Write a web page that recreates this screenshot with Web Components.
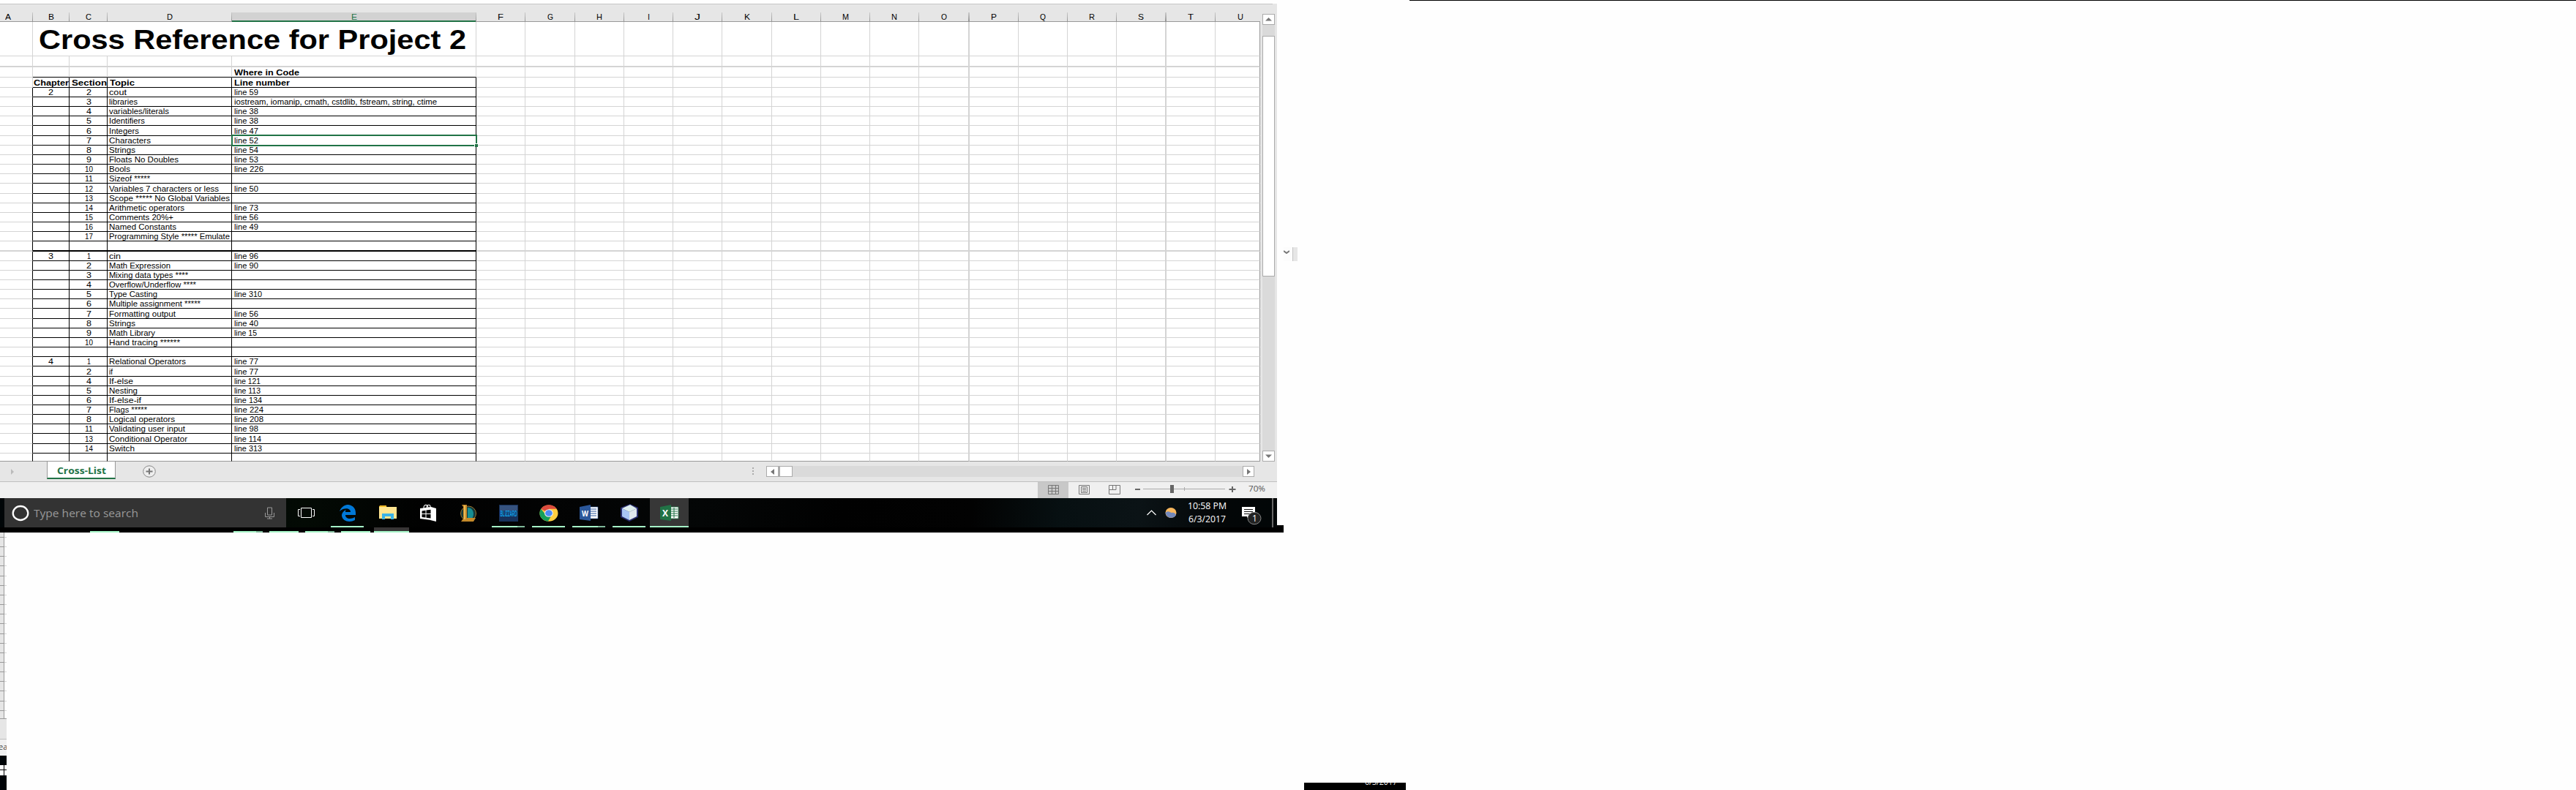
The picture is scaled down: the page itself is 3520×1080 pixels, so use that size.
<!DOCTYPE html>
<html lang="en">
<head>
<meta charset="utf-8">
<title>Cross Reference for Project 2</title>
<style>
html,body{margin:0;padding:0;background:#fefefe}
body{width:3520px;height:1080px;overflow:hidden;font-family:"Liberation Sans",sans-serif}
</style>
</head>
<body>
<desk-top></desk-top>
<script>
// Text scaled horizontally to a fixed width: <fit-text w="40">abc</fit-text>
class FitText extends HTMLElement{
  connectedCallback(){
    const r=this.attachShadow({mode:'open'});
    r.innerHTML='<style>:host{display:inline-block;white-space:nowrap;flex:none}span{display:inline-block;transform-origin:0 50%}</style><span><slot></slot></span>';
    const s=r.querySelector('span'),w=+this.getAttribute('w');
    this.style.width='auto';
    const n=s.getBoundingClientRect().width;
    this.style.width=w+'px';
    if(n)s.style.transform='scaleX('+(w/n)+')';
  }
}
customElements.define('fit-text',FitText);

const define=(name,html)=>customElements.define(name,class extends HTMLElement{
  connectedCallback(){if(!this.shadowRoot)this.attachShadow({mode:'open'}).innerHTML=typeof html==='function'?html(this):html;}
});

const COLS=[['A',45],['B',50],['C',52],['D',170],['E',334],['F',67],['G',68],['H',67],['I',67],['J',67],['K',68],['L',67],['M',67],['N',67],['O',69],['P',67],['Q',67],['R',67],['S',68],['T',67],['U',61]];

define('column-header',()=>`<style>
:host{display:flex;height:24px;background:#e6e6e6;box-sizing:border-box;border-top:1px solid #c6c6c6;padding-top:11px;width:1739px}
div{box-sizing:border-box;height:13px;display:flex;justify-content:center;font:11px/13px "Liberation Sans",sans-serif;color:#000;border-right:1px solid;border-image:linear-gradient(#cfcfcf,#8c8c8c) 1;box-shadow:inset 0 -1px #999}
.thick{border-right-width:2px}.A{padding-right:22px}.U{border:0;padding-left:6px}
.E{background:#d2d2d2;color:#217346;box-shadow:inset 0 -2px #217346}
</style>`+COLS.map(([n,w])=>`<div class="${n} ${n=='O'||n=='S'?'thick':''}" style="width:${w}px"><fit-text w="${n=='I'?3:n=='M'?9:8}">${n}</fit-text></div>`).join(''));

// row bottom, chapter, section, topic, topic width, location, location width
const ROWS=[
[76],[91],[105],[119],
[132,2,2,'cout',24,'line 59',33],
[145,0,3,'libraries',39,'iostream, iomanip, cmath, cstdlib, fstream, string, ctime',277],
[158,0,4,'variables/literals',82,'line 38',33],
[171,0,5,'Identifiers',49,'line 38',33],
[185,0,6,'Integers',41,'line 47',33],
[198,0,7,'Characters',57,'line 52',33],
[211,0,8,'Strings',36,'line 54',33],
[224,0,9,'Floats  No Doubles',95,'line 53',33],
[237,0,10,'Bools',29,'line 226',40],
[250,0,11,'Sizeof *****',56],
[264,0,12,'Variables 7 characters or less',150,'line 50',33],
[277,0,13,'Scope *****  No Global Variables',165],
[290,0,14,'Arithmetic operators',103,'line 73',33],
[303,0,15,'Comments 20%+',88,'line 56',33],
[316,0,16,'Named Constants',92,'line 49',33],
[329,0,17,'Programming Style ***** Emulate',165],
[343],
[356,3,1,'cin',16,'line 96',33],
[369,0,2,'Math Expression',84,'line 90',33],
[382,0,3,'Mixing data types ****',108],
[395,0,4,'Overflow/Underflow ****',119],
[408,0,5,'Type Casting',66,'line 310',38],
[421,0,6,'Multiple assignment *****',125],
[435,0,7,'Formatting output',91,'line 56',33],
[448,0,8,'Strings',36,'line 40',33],
[461,0,9,'Math Library',63,'line 15',31],
[474,0,10,'Hand tracing  ******',97],
[487],
[500,4,1,'Relational Operators',105,'line 77',33],
[514,0,2,'if',5,'line 77',33],
[527,0,4,'If-else',33,'line 121',36],
[540,0,5,'Nesting',39,'line 113',36],
[553,0,6,'If-else-if',44,'line 134',38],
[566,0,7,'Flags *****',52,'line 224',40],
[579,0,8,'Logical operators',90,'line 208',40],
[592,0,11,'Validating user input',104,'line 98',33],
[606,0,13,'Conditional Operator',107,'line 114',37],
[619,0,14,'Switch',35,'line 313',38],
[630]];
define('sheet-grid',()=>{
  let prev=29;
  const fit=(t,w)=>t?`<fit-text w="${w}">${t}</fit-text>`:'';
  const body=ROWS.map((r,i)=>{
    const h=r[0]-prev;prev=r[0];
    const thick=r[0]==91||r[0]==343,tab=i>=4;
    const inner=COLS.map(([n,w],c)=>{
      let cls='c '+n;let t='';
      if(i==0){if(n=='C'||n=='D'||n=='E')return '';
        if(n=='B'){w=606;cls+=' title';t=fit('Cross Reference for Project 2',584);}}
      if(n=='O'||n=='S')cls+=' tv';
      if(c>=1&&c<=4&&i>=2)cls+=' kb';
      if((tab&&c<=4)||(i==3&&c>=1&&c<=4))cls+=' kr';
      if(i==2&&n=='E')t='<b>'+fit('Where in Code',89)+'</b>';
      if(i==3&&c>=1&&c<=4)t='<b>'+fit(['Chapter','Section','Topic','Line number'][c-1],[48,48,34,76][c-1])+'</b>';
      if(tab){
        if(n=='B'&&r[1])t=fit(r[1],7);
        if(n=='C'&&r[2])t=fit(r[2],r[2]==1?5:r[2]>9?11:7);
        if(n=='D'&&r[3])t=fit(r[3],r[4]);
        if(n=='E'&&r[5])t=fit(r[5],r[6]);
      }
      return `<div class="${cls}" style="width:${w}px">${t}${n=='E'&&r[0]==198?'<i></i>':''}</div>`;
    }).join('');
    return `<div class="row ${thick?'th':''} ${i==ROWS.length-1?'last':''} ${i==3?'head':''}" style="height:${h}px">${inner}</div>`;
  }).join('');
  return `<style>
:host{display:block;width:1721px;background:#fff;font:11px/12px "Liberation Sans",sans-serif;color:#000}
.row{display:flex}
.c{box-sizing:border-box;flex:none;border-right:1px solid #d4d4d4;border-bottom:1px solid #d4d4d4;display:flex;align-items:flex-end;white-space:pre;position:relative}
.tv{border-right-width:2px}.th .c{border-bottom-width:2px}
.kb{border-bottom-color:#000}.kr{border-right-color:#000}
.B,.C{justify-content:center}.C{padding-left:1px}.D{padding-left:2px}.E{padding-left:3px}
.U{border-right-color:#999}
.last .c{border-bottom-color:#999}
.head .B{justify-content:flex-start;padding-left:1px}.head .C{justify-content:flex-start;padding-left:3px}.head .D{padding-left:3px}
.title{justify-content:flex-start;padding-left:8px;padding-top:3px;font:bold 36px/42px "Liberation Sans",sans-serif;align-items:center}
i{position:absolute;left:-1px;top:-2px;right:-2px;bottom:-2px;border:2px solid #217346;z-index:1}
i::after{content:"";position:absolute;right:-3px;bottom:-3px;width:4px;height:4px;background:#217346;border-left:1px solid #fff;border-top:1px solid #fff}
</style>${body}`;
});

define('v-scroll',`<style>
:host{display:flex;flex-direction:column;width:17px;height:612px;background:#dadada}
.b{box-sizing:border-box;border:1px solid #ababab;background:#fff;height:15px;display:flex;align-items:center;justify-content:center}
.t{box-sizing:border-box;border:1px solid #ababab;background:#fff;margin-top:15px;height:329px}
.d{margin-top:auto}svg{display:block}
</style><div class="b"><svg width="9" height="5"><path d="M0 4.5L4.5 0L9 4.5Z" fill="#777"/></svg></div><div class="t"></div><div class="b d"><svg width="9" height="5"><path d="M0 .5L4.5 5L9 .5Z" fill="#777"/></svg></div>`);

define('sheet-tabs',`<style>
:host{display:flex;height:28px;box-sizing:border-box;background:#e6e6e6;border-bottom:1px solid #c0c0c0;width:1745px;align-items:flex-start}
.nav{width:64px;height:27px;display:flex;align-items:center;padding-left:15px;box-sizing:border-box}
.tab{box-sizing:border-box;width:94px;height:25px;margin-top:-1px;background:#fff;border:1px solid #999;border-top:0;border-bottom:2px solid #217346;display:flex;justify-content:center;font:bold 13px/26px "Open Sans",sans-serif;color:#217346}
.add{margin:5px 0 0 37px}
.dots{margin:8px 0 0 815px;width:2px;height:10px;background:repeating-linear-gradient(#ababab 0 2px,transparent 2px 4px)}
.bar{margin:6px 0 0 17px;width:294px;height:15px;background:#dadada;display:flex;justify-content:space-between}
.bar>div{display:flex}.bx{box-sizing:border-box;height:15px;border:1px solid #ababab;background:#fff;display:flex;align-items:center;justify-content:center}
svg{display:block}
</style>
<div class="nav"><svg width="4" height="8"><path d="M0 0L4 4L0 8Z" fill="#bbb"/></svg></div>
<div class="tab"><fit-text w="67">Cross-List</fit-text></div>
<svg class="add" width="18" height="17"><ellipse cx="9" cy="8.5" rx="8.3" ry="7.7" fill="#eee" stroke="#888"/><path d="M4.500 8.500h9M9 4.500v8" stroke="#777" stroke-width="2"/></svg>
<div class="dots"></div>
<div class="bar" style="width:667px"><div><div class="bx" style="width:17px"><svg width="5" height="8"><path d="M5 0L0 4L5 8Z" fill="#777"/></svg></div><div class="bx" style="width:19px;border-left-width:2px"></div></div><div class="bx" style="width:16px"><svg width="5" height="8"><path d="M0 0L5 4L0 8Z" fill="#777"/></svg></div></div>`);

define('status-bar',`<style>
:host{display:flex;height:22px;width:1745px;background:#f0f0f0;box-sizing:border-box;padding-left:1418px}
.v{width:42px;height:22px;display:flex;align-items:center;justify-content:center;padding-bottom:2px;box-sizing:border-box}
.on{background:#c8c8c8}.z{margin:3px 0 0 7px}.p{margin:2px 0 0 17px;font:11px/14px "Open Sans",sans-serif;color:#555}
svg{fill:none;stroke:#777}
</style>
<div class="v on"><svg width="15" height="13"><path d="M.5.5h14v12H.5zM.5 4.500h14M.5 8.500h14M5.500.5v12M10.500.5v12"/></svg></div>
<div class="v"><svg width="15" height="13"><path d="M.5.5h14v12H.5zM3.500 2.500h8v8h-8zM5 4.500h5M5 6.500h5M5 8.500h5"/></svg></div>
<div class="v"><svg width="16" height="13"><path d="M.5.5h15v12H.5zM.5 6.500h9.500v-6M5.500.5v6"/></svg></div>
<svg class="z" width="138" height="14"><path d="M0 7h7M128.500 7h9M133 3v8" stroke="#666" stroke-width="2"/><path d="M11 6.500h112M67.500 4v5" stroke="#aaa"/><path d="M48 1h5v11h-5z" fill="#666" stroke="none"/></svg>
<div class="p"><fit-text w="23">70%</fit-text></div>`);

const ICONS={
edge:[22,23,'<path d="M0 9C3 1 9 0 12 0C19 1 22 6 22 11V14H8C8 20 16 20 21 17V21C14 25 4 23 3 15C3 11 6 8 9 7C8 8 8 9 8 10H15C15 5 7 3 0 9Z" fill="#0078d7"/>'],
files:[24,20,'<path d="M0 2H10V0H1Z" fill="#fbc02d"/><path d="M0 2h24v16H0z" fill="#ffe590"/><path d="M0 2h9l2-1H0z" fill="#f5b921"/><path d="M4 11h16v8h-4v-4H8v4H4z" fill="#3bb3e6"/>'],
store:[24,24,'<path d="M6 6C6 0 11 0 12 5M10 5C10 0 16 0 15 5" fill="none" stroke="#eee" stroke-width="1.200"/><path d="M1 6L16 4V22L1 20ZM16 4l7 2v18l-8-2z" fill="#fff"/><path d="M3.500 9.500l5-.8v4.300h-5zM9.500 8.500l6-.8V13h-6zM3.500 14h5v4.500l-5-.6zM9.500 14h6v5.500l-6-.8z" fill="#000"/>'],
lol:[23,23,'<ellipse cx="12" cy="12" rx="10.500" ry="10" fill="#13383b" stroke="#9b732b"/><path d="M11 4C19 4 21 13 17 19H11Z" fill="#168e92"/><path d="M3 0H10V18H22L19 23H2L5 19V3Z" fill="#c58a2a"/><path d="M6 1h2v19H6z" fill="#e9b955"/>'],
bliz:[26,23,'<path d="M0 0h26v23H0z" fill="#17315a"/><path d="M1 1h24v7H1z" fill="#36537f"/><text x="1.500" y="15.500" textLength="23" lengthAdjust="spacingAndGlyphs" font-family="Liberation Sans" font-weight="bold" font-size="10" fill="#10a5ed">BLIZZARD</text>'],
chrome:[26,23,'<g transform="scale(1.080 .96)"><circle cx="12" cy="12" r="11.600" fill="#ffcd40"/><path d="M12 12L2 6A11.600 11.600 0 0 1 22 6H12Z" fill="#dc4b3e"/><path d="M2 6A11.600 11.600 0 0 0 11 23.600L16 14L8 14Z" fill="#159f5c"/><circle cx="12" cy="12" r="5.500" fill="#eee"/><circle cx="12" cy="12" r="4.500" fill="#4c8bf5"/></g>'],
word:[26,23,'<path d="M14 3h11v16H14z" fill="#fff" stroke="#2b579a" stroke-width=".6"/><path d="M15 6h8M15 9h8M15 12h8M15 15h8" stroke="#2b579a"/><path d="M0 3L15 0V22L0 20Z" fill="#2b579a"/><text x="3" y="15.500" textLength="9" lengthAdjust="spacingAndGlyphs" font-family="Open Sans" font-weight="bold" font-size="11" fill="#fff">W</text>'],
cube:[26,24,'<path d="M1 5L14 0L25 5V18L13 24L1 18Z" fill="#272b6c"/><path d="M3 6L14 1L23 6L13 11Z" fill="#dceceb"/><path d="M3 6L13 11V22L3 17Z" fill="#a8c4f6"/><path d="M23 6L13 11V22L23 17Z" fill="#e0e7ed"/>'],
excel:[26,23,'<path d="M14 3h11v16H14z" fill="#fff" stroke="#217346" stroke-width=".8"/><path d="M15 6h9M15 9h9M15 12h9M15 15h9M19 4v14" stroke="#217346"/><path d="M0 3L15 0V22L0 20Z" fill="#217346"/><text x="3" y="16" textLength="8" lengthAdjust="spacingAndGlyphs" font-family="Open Sans" font-weight="bold" font-size="12" fill="#fff">X</text>']};
define('task-icon',el=>{const [w,h,p]=ICONS[el.getAttribute('name')];const k=el.getAttribute('kind')||'';
return `<style>:host{display:flex;flex:none;flex-direction:column;align-items:center;width:55px;height:40px}
.x{display:flex;align-items:center;justify-content:center;width:53px;height:38px;padding-top:2px;box-sizing:border-box}svg{display:block;overflow:visible}
.u{height:2px;width:45px;background:#a6f5c8}.u.multi{background:linear-gradient(90deg,#a6f5c8 0 35px,#7fb89a 35px)}.u.none{background:none}
.x.active{background:#373737}.u.active{width:53px}</style>
<div class="x ${k}"><svg width="${w}" height="${h}">${p}</svg></div><div class="u ${k}"></div>`});

define('task-bar',`<style>
:host{display:flex;height:40px;width:1745px;background:linear-gradient(95deg,#000507 0,#030a04 24%,#010101 33%,#040606 55%,#010101 66%,#020202 76%,#071012 83%,#0b1316 89%,#030607 96%,#020607);box-sizing:border-box;padding-left:6px}
.s{width:385px;height:40px;background:#333;display:flex;align-items:center;box-sizing:border-box;padding-left:10px;flex:none}
.s fit-text{margin-left:6px;font:15px/20px "Open Sans",sans-serif;color:#999}
.mic{margin-left:173px}.tv{width:55px;display:flex;align-items:center;justify-content:center;flex:none}
.first{margin-left:2px}
.up{margin:16px 0 0 625px;flex:none}.w{margin:12px 0 0 12px;flex:none}
.clock{margin:2px 0 0 14px;width:55px;display:flex;flex-direction:column;align-items:center;font:12px/18px "Open Sans",sans-serif;color:#fff;flex:none}
.n{margin:12px 0 0 20px;flex:none}.edge{margin-left:14px;width:2px;background:#666}
</style>
<div class="s"><svg width="24" height="24"><ellipse cx="12" cy="12.500" rx="10.300" ry="9.500" fill="none" stroke="#fff" stroke-width="2.300"/></svg><fit-text w="143">Type here to search</fit-text>
<svg class="mic" width="13" height="17"><path d="M3.500 1h6v10h-6zM.5 8v5.500h12V8M6.500 13.500v2.500M3 16h7" fill="none" stroke="#999"/></svg></div>
<div class="tv"><svg width="23" height="16"><path d="M4.500 1.500h14v13h-14zM3 3.500H.5v9H3M20 3.500h2.500v9H20" fill="none" stroke="#fff"/></svg></div>
<task-icon name="edge" class="first" style="margin-left:1px"></task-icon><task-icon name="files" kind="none"></task-icon><task-icon name="store" kind="none"></task-icon><task-icon name="lol" kind="none"></task-icon><task-icon name="bliz" kind="multi"></task-icon><task-icon name="chrome"></task-icon><task-icon name="word" kind="multi"></task-icon><task-icon name="cube"></task-icon><task-icon name="excel" kind="active"></task-icon>
<svg class="up" width="13" height="8"><path d="M.5 7L6.500 1L12.500 7" fill="none" stroke="#fff" stroke-width="1.200"/></svg>
<svg class="w" width="16" height="16"><ellipse cx="8" cy="8" rx="7.500" ry="7" fill="#f8b75d"/><path d="M.5 8C4 4 8 8 9 8C12 7 14 9 15 11C12 17 2 16 .5 8Z" fill="#7388bb"/></svg>
<div class="clock"><fit-text w="53">10:58 PM</fit-text><fit-text w="51">6/3/2017</fit-text></div>
<svg class="n" width="27" height="25"><path d="M0 0h18v13h-9l-2 2v-2H0z" fill="#fff"/><path d="M3 3.500h12M3 6.500h12M3 9.500h9" stroke="#111"/><ellipse cx="17" cy="15.500" rx="9" ry="8.200" fill="#222" stroke="#888"/><text x="14" y="20" font-family="Open Sans" font-size="12" fill="#fff">1</text></svg>
<div class="edge"></div>`);

define('lower-strip',()=>{
// [gap before, width, colour]
const segs=[[123,40,0],[156,31,0],[0,9,1],[9,40,0],[9,31,0],[0,9,1],[9,40,0],[5,48,2]];
return `<style>:host{display:flex;align-items:flex-end;background:#000;width:1754px;height:7px}
div{height:2px;background:#a6f5c8;flex:none}.k1{background:#7fb89a}.k2{height:7px;background:linear-gradient(#373535 0 5px,#a6f5c8 5px)}</style>`+segs.map(([g,w,k])=>`<div class="k${k}" style="margin-left:${g}px;width:${w}px"></div>`).join('')});

define('left-sliver',()=>{
const t=[734,747,760,773,787,800,813,826,839,852,866,879,892,905,918,931,944,958,971];let p=727;
return `<style>:host{display:block;width:9px;overflow:hidden;height:352px}
.r{display:flex}.a{box-sizing:border-box;width:6px;background:#e6e6e6;border-right:1px solid #999;border-bottom:1px solid #999}.b{box-sizing:border-box;width:3px;background:#fff;border-bottom:1px solid #d4d4d4}
.e .a,.e .b{border-bottom-color:#999}.g{height:28px;box-sizing:border-box;background:#e6e6e6;border-bottom:1px solid #c0c0c0}
.s{height:22px;background:#f0f0f0;font:11px/19px "Open Sans",sans-serif;color:#444;overflow:hidden;display:flex}.s span{margin-left:-2px}
.k{background:#000508;height:13px}.w{height:14px;background:linear-gradient(#000,#000) 5px 0/1px 14px no-repeat,linear-gradient(#000,#000) 0 6px/9px 1px no-repeat,#fff}
.l{height:20px;background:#000307}</style>`+[...t,982].map(y=>{const h=y-p;p=y;return `<div class="r ${y==982?'e':''}"><div class="a" style="height:${h}px"></div><div class="b" style="height:${h}px"></div></div>`}).join('')+
`<div class="g"></div><div class="s"><span>ea</span></div><div class="k"></div><div class="w"></div><div class="l"></div>`});

define('excel-window',`<style>
:host{display:flex;flex-direction:column;width:1745px;background:#e6e6e6}
.m{display:flex}.g{width:1721px;overflow:visible;flex:none}.v{margin:14px 0 0 4px}
</style><div class="m"><div class="g"><column-header style="height:25px"></column-header><sheet-grid></sheet-grid></div><v-scroll class="v"></v-scroll></div><sheet-tabs></sheet-tabs><status-bar></status-bar><task-bar></task-bar>`);

define('mid-scraps',`<style>
:host{display:flex;flex-direction:column;width:172px;height:1080px}
.top{height:718px;display:flex;box-sizing:border-box;padding-top:338px}
.a{width:12px;height:19px;background:#fcfcfc}.b{box-sizing:border-box;width:7px;height:19px;background:#e6e6e6;border-left:1px solid #c6c6c6}
svg{display:block;margin-top:4px}
.k{background:#000;height:10px;width:139px;margin:352px 0 0 28px;overflow:hidden;display:flex;box-sizing:border-box;padding-left:83px;color:#eee;font:12px/18px "Open Sans",sans-serif}
fit-text{margin-top:-10px}
</style><div class="top"><div class="a"><svg width="8" height="5"><path d="M0 1L4 4L8 1" fill="none" stroke="#777" stroke-width="2"/></svg></div><div class="b"></div></div><div class="k"><fit-text w="44">6/3/2017</fit-text></div>`);

define('desk-top',`<style>
:host{display:flex;width:3520px;height:1080px;overflow:hidden;background:#fefefe}
.l{width:1754px;flex:none;display:flex;flex-direction:column}
.w{display:flex;padding-top:5px;align-items:flex-end}.k{width:9px;height:3px;background:#000}
mid-scraps{flex:none}.r{flex:1;height:1px;background:#000}
</style><div class="l"><div class="w"><excel-window></excel-window><div class="k"></div></div><lower-strip></lower-strip><left-sliver></left-sliver></div><mid-scraps></mid-scraps><div class="r"></div>`);
</script>
</body>
</html>
